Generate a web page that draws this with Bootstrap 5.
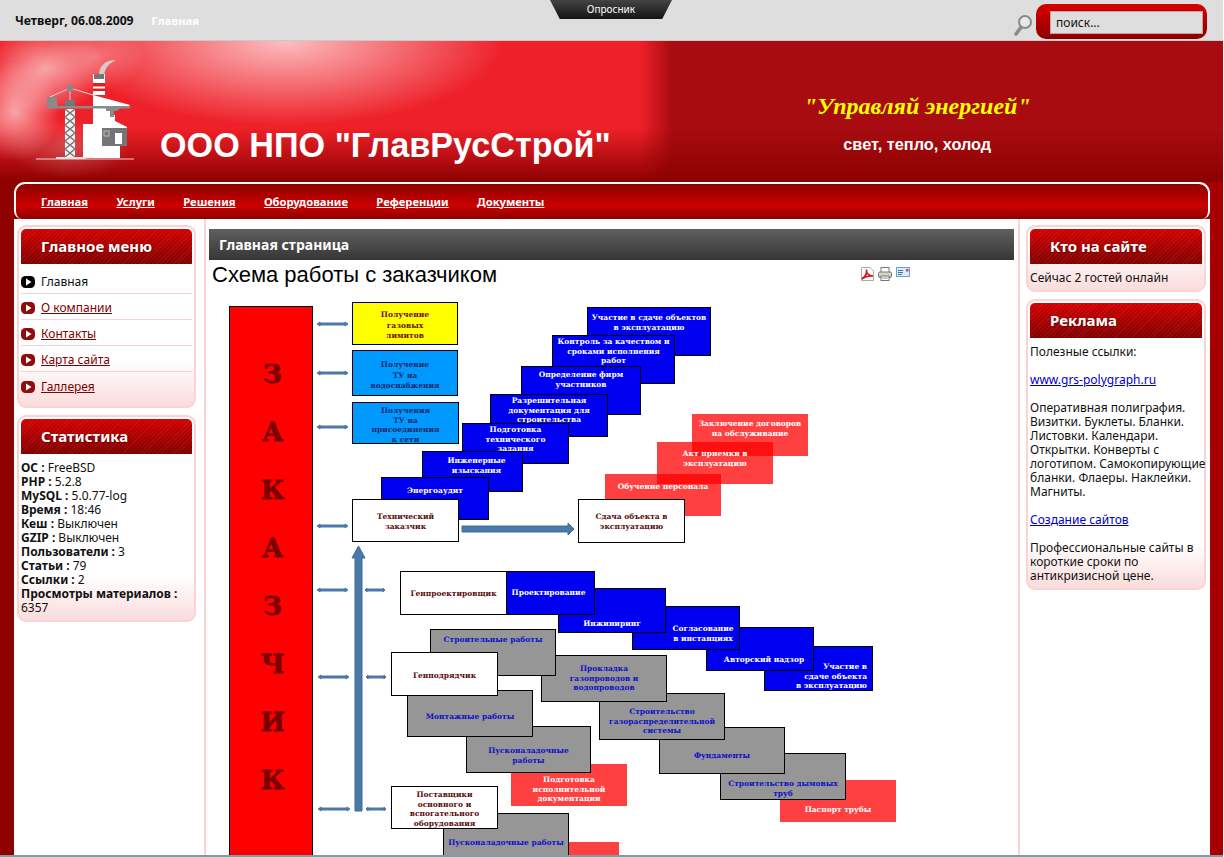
<!DOCTYPE html>
<html lang="ru">
<head>
<meta charset="utf-8">
<title>ООО НПО "ГлавРусСтрой"</title>
<link rel="stylesheet" href="https://cdn.jsdelivr.net/npm/bootstrap@5.3.0/dist/css/bootstrap.min.css">
<style>
html,body{height:857px;overflow:hidden;background:#fff;}
body{font-family:"Noto Sans","DejaVu Sans",sans-serif;font-size:12px;line-height:14px;color:#111;}
.pagewrap{width:1223px;height:857px;overflow:hidden;display:flex;flex-direction:column;background:linear-gradient(to right,#8f0000,#a80000);border-bottom:2px solid #8a98a4;}
.topstrip{height:41px;flex:none;background:#dedede;border-bottom:1px solid #c9c9c9;position:relative;padding-right:16px;}
.datewrap{padding-top:2px;}
.datetxt{margin-left:15px;font-weight:700;font-size:12.2px;color:#111;}
.hometxt{margin-left:18px;font-weight:700;font-size:11.3px;color:#fff;}
.polltab{position:absolute;left:550px;top:0;width:122px;height:19px;background:linear-gradient(#444,#141414);clip-path:polygon(0 0,100% 0,92% 100%,8% 100%);color:#fff;font-size:10px;line-height:19px;text-align:center;}
.searchbox{width:171px;height:35px;margin-top:4px;margin-left:3px;padding:7px 4px 5px 14px;border-radius:10px;background:linear-gradient(#d80000,#8c0000);}
.searchbox .form-control{height:23px;min-height:0;padding:0 5px;border-radius:0;border:1px solid #c9a0a0;background:#dedede;color:#111;font-size:12px;line-height:21px;}
.lensicon{width:20px;height:22px;margin-top:14px;flex:none;}
.hero{height:141px;flex:none;background:
 radial-gradient(ellipse 60px 45px at 45px 28px,rgba(255,255,255,.6),transparent 100%),
 radial-gradient(ellipse 45px 50px at 15px 70px,rgba(255,255,255,.6),transparent 100%),
 radial-gradient(ellipse 50px 35px at 95px 15px,rgba(255,255,255,.3),transparent 100%),
 radial-gradient(ellipse 60px 30px at 70px 108px,rgba(255,255,255,.22),transparent 100%),
 radial-gradient(ellipse 220px 85px at 285px 0,rgba(255,235,235,.78),transparent 100%),
 linear-gradient(to bottom,transparent 62%,#8c0000 100%),
 linear-gradient(to right,#ee2029 0,#ee2029 640px,#a80c10 672px,#a80c10 100%);}
.logobox{width:160px;height:141px;flex:none;}
.brandname{margin:82px 0 0;font:700 34.2px/44px "Liberation Sans",Arial,sans-serif;color:#fff;white-space:nowrap;}
.slogan{margin:51px 0 0;font:italic 700 24px/28px "Liberation Serif","Times New Roman",serif;color:#ffff00;}
.sublogan{margin:14px 0 0;font:700 16.3px/20px "Liberation Sans",Arial,sans-serif;color:#fff;}
.mainbar{height:37px;flex:none;margin:0 13px 0 14px;padding-left:10.8px;border:solid #fff;border-width:2px 2px 0 2px;border-radius:11px 11px 8px 8px;background:linear-gradient(#8e0000,#cc0000 62%,#8c0000);align-items:center;}
.mainbar .nav-link{padding:0 14.2px;color:#fff;font-weight:700;font-size:11.2px;line-height:16px;text-decoration:underline;}
.bodyarea{flex:1 1 auto;min-height:0;margin:0 13px 0 14px;background:#fff;overflow:hidden;}
.leftrail{flex:0 0 192px;padding:6px 8px 0 3px;border-right:2px solid #fbd4d4;}
.midrail{width:812px;flex:none;padding:10px 0 0 3px;overflow:hidden;}
.rightrail{width:191px;flex:none;padding:6px 3px 0 6px;border-left:2px solid #fbd4d4;}
.sidecard{border:2px solid #fbd3d3;border-radius:9px;padding:2px 2px 4px;margin-bottom:7px;background:linear-gradient(to bottom,#fff 0,#fff calc(100% - 45px),#fbdcdc 100%);}
.sidehead{height:35px;padding:0 0 0 20px;border:0;border-radius:9px;background:repeating-linear-gradient(135deg,rgba(255,255,255,.06) 0 1px,transparent 1px 3px),linear-gradient(#d40000,#800000);color:#fff;font-weight:700;font-size:15px;line-height:35px;text-shadow:1px 1px 1px #600;}
.sidebody{padding:7px 0 1px;font-size:12px;line-height:14px;}
.sidebody p{margin:0 0 14px;white-space:nowrap;}
.sidebody p:last-child{margin:0;}
.sidebody a{color:#0000c8;}
.menulist{background:transparent;margin-top:4px;padding-bottom:4px;}
.menulist .list-group-item{height:26px;padding:3px 0 0;background:transparent;border:0;border-bottom:1px solid #f7d2d2;border-radius:0;display:flex;align-items:center;gap:6px;color:#800000;font-size:12px;}
.menulist .list-group-item span{text-decoration:underline;}
.menulist .list-group-item.nowitem{color:#111;}
.menulist .list-group-item.nowitem span{text-decoration:none;}
.bulletico{width:14px;height:12px;flex:none;}
.pagebar{height:31px;width:805px;padding-left:10px;background:linear-gradient(#606060,#363636);color:#fff;font-weight:700;font-size:14px;line-height:31px;}
.arthead{height:30px;width:805px;padding:3px 104px 0 3px;}
.arthead h2{margin:0;font:400 22px/24px "Liberation Sans",Arial,sans-serif;color:#000;}
.toolico{gap:4px;margin-top:4px;}
.diagram{position:relative;width:805px;height:700px;}
.diagram svg{position:absolute;left:0;top:0;}
.dn{position:absolute;box-sizing:border-box;border:1.5px solid #000;text-align:center;white-space:nowrap;font:700 7.5px/9.5px "DejaVu Serif",serif;}
.whitebox{background:#fff;color:#5a0a0a;}
.bluebox{background:#0000f0;color:#fff;}
.graybox{background:#969696;color:#1010c8;}
.redbox{background:rgba(255,0,0,.75);color:#fff;border:0;}
.yellowbox{background:#ff0;color:#701010;line-height:10.5px;}
.skybox{background:#0099ff;color:#1a2a6a;}
.bigcol{left:20px;top:16px;width:84px;height:600px;background:#f00;padding:38px 0 0 3px;font-size:26px;line-height:58px;color:#7d0000;font-weight:700;-webkit-text-stroke:.8px #7d0000;}
.n1{left:143px;top:12px;width:106px;height:43px;padding-top:7px;}
.n2{left:143px;top:60px;width:106px;height:46px;padding-top:9px;line-height:10.5px;}
.n3{left:143px;top:112px;width:107px;height:42px;padding-top:3px;}
.n4{left:143px;top:209px;width:107px;height:43px;padding-top:12px;line-height:10px;z-index:9;}
.n5{left:172px;top:187px;width:108px;height:43px;padding-top:8px;z-index:8;}
.n6{left:213px;top:161px;width:101px;height:41px;padding:4px 0 0 8px;z-index:7;}
.n7{left:253px;top:133px;width:107px;height:41px;padding-top:1px;z-index:6;}
.n8{left:281px;top:104px;width:118px;height:43px;padding-top:1px;z-index:5;}
.n9{left:312px;top:76px;width:120px;height:49px;padding-top:3px;z-index:4;}
.n10{left:343px;top:45px;width:123px;height:49px;padding-top:1px;z-index:3;}
.n11{left:378px;top:17px;width:124px;height:49px;padding-top:5px;z-index:2;}
.n12{left:483px;top:124px;width:116px;height:42px;padding-top:5px;}
.n13{left:448px;top:152px;width:116px;height:42px;padding-top:7px;}
.n14{left:396px;top:184px;width:116px;height:42px;padding-top:8px;}
.n15{left:369px;top:209px;width:107px;height:44px;padding-top:12px;line-height:10px;z-index:3;}
.n16{left:191px;top:281px;width:107px;height:44px;padding-top:17px;z-index:9;}
.n17{left:277px;top:281px;width:109px;height:44px;padding:16px 0 0 16px;z-index:8;}
.n18{left:349px;top:298px;width:108px;height:45px;padding-top:30px;z-index:7;}
.n19{left:423px;top:316px;width:108px;height:44px;padding:17px 0 0 34px;z-index:6;}
.n20{left:497px;top:337px;width:108px;height:44px;padding:27px 0 0 8px;z-index:5;}
.n21{left:555px;top:356px;width:109px;height:45px;padding:15px 5px 0 0;z-index:4;text-align:right;}
.n22{left:182px;top:362px;width:107px;height:44px;padding-top:18px;z-index:19;}
.n23{left:221px;top:339px;width:126px;height:47px;padding-top:5px;z-index:18;}
.n24{left:332px;top:365px;width:126px;height:47px;padding-top:8px;z-index:17;}
.n25{left:390px;top:403px;width:126px;height:47px;padding-top:13px;z-index:16;}
.n26{left:450px;top:437px;width:126px;height:47px;padding-top:23px;z-index:15;}
.n27{left:511px;top:463px;width:126px;height:47px;padding-top:25px;z-index:14;}
.n28{left:571px;top:490px;width:116px;height:42px;padding-top:25px;z-index:13;}
.n29{left:198px;top:400px;width:126px;height:47px;padding-top:21px;z-index:18;}
.n30{left:257px;top:436px;width:125px;height:47px;padding-top:19px;z-index:17;}
.n31{left:302px;top:474px;width:116px;height:42px;padding-top:11px;z-index:16;}
.n32{left:182px;top:496px;width:107px;height:43px;padding-top:3px;z-index:19;}
.n33{left:234px;top:523px;width:126px;height:47px;padding-top:24px;z-index:18;}
.n34{left:360px;top:552px;width:50px;height:42px;z-index:17;}
</style>
</head>
<body>
<div class="pagewrap">
  <div class="topstrip d-flex">
    <div class="datewrap d-flex align-items-center"><span class="datetxt">Четверг, 06.08.2009</span><span class="hometxt">Главная</span></div>
    <div class="polltab">Опросник</div>
    <svg class="lensicon ms-auto" viewBox="0 0 20 22" aria-hidden="true"><line x1="9" y1="12" x2="3" y2="20" stroke="#8a8a8a" stroke-width="3.5" stroke-linecap="round"/><circle cx="12" cy="8" r="6" fill="#e8e8e8" stroke="#8a8a8a" stroke-width="2"/></svg>
    <div class="searchbox"><input class="form-control" type="text" value="поиск..." aria-label="поиск"></div>
  </div>

  <div class="hero row g-0">
    <div class="col-6 d-flex">
      <svg class="logobox" viewBox="0 41 160 141" aria-hidden="true">
        <path d="M99 75C99 66 105 60 116 60C109 63 105 68 104 75Z" fill="#d8c8c8"/>
        <rect x="93" y="74" width="12" height="21" fill="#fff"/>
        <rect x="94" y="74" width="10" height="5" fill="#777"/>
        <rect x="93" y="83" width="12" height="3.5" fill="#d82020"/>
        <rect x="93" y="88.500" width="12" height="2.500" fill="#d82020"/>
        <path d="M93 95L130 105L128 107H111V115H115V121L127 127V146H120V158H83V124H93Z" fill="#fff"/>
        <path d="M106 107H122L117 111H114V117H110V111H106Z" fill="#8a8a8a"/>
        <path d="M102 128H127V146H102Z" fill="#757575"/>
        <rect x="115" y="133" width="7" height="11" fill="#fff"/>
        <rect x="104" y="131" width="5" height="5" fill="none" stroke="#bbb"/>
        <path d="M50 97L70 88L93 95M70 88V100" fill="none" stroke="#f5d0d0" stroke-width="1"/>
        <circle cx="70" cy="88" r="3.500" fill="#888"/>
        <rect x="47" y="97" width="10" height="9" fill="#8a8a8a"/>
        <rect x="65" y="100" width="10" height="6" fill="#777"/>
        <rect x="47" y="106" width="83" height="2.500" fill="#8a8a8a"/>
        <rect x="65" y="109" width="10" height="48" fill="#f2f2f2"/>
        <path d="M65 109L75 117L65 125L75 133L65 141L75 149L65 157M75 109L65 117L75 125L65 133L75 141L65 149L75 157" fill="none" stroke="#777" stroke-width="1.500"/>
        <rect x="36" y="158.500" width="98" height="1" fill="#f3d0d0"/>
        <rect x="56" y="157" width="30" height="2" fill="#e8dede"/>
      </svg>
      <h1 class="brandname">ООО НПО "ГлавРусСтрой"</h1>
    </div>
    <div class="col-6 text-center">
      <p class="slogan">"Управляй энергией"</p>
      <p class="sublogan">свет, тепло, холод</p>
    </div>
  </div>

  <nav class="mainbar nav">
    <a class="nav-link" href="#">Главная</a>
    <a class="nav-link" href="#">Услуги</a>
    <a class="nav-link" href="#">Решения</a>
    <a class="nav-link" href="#">Оборудование</a>
    <a class="nav-link" href="#">Референции</a>
    <a class="nav-link" href="#">Документы</a>
  </nav>

  <div class="bodyarea d-flex">
    <aside class="leftrail">
      <div class="card sidecard">
        <div class="card-header sidehead">Главное меню</div>
        <div class="list-group list-group-flush menulist">
          <a href="#" class="list-group-item nowitem"><svg class="bulletico" viewBox="0 0 14 12" aria-hidden="true"><rect width="14" height="12" rx="4.500" fill="#000"/><path d="M5 2.500L10.500 6L5 9.500Z" fill="#fff"/></svg><span>Главная</span></a>
          <a href="#" class="list-group-item"><svg class="bulletico" viewBox="0 0 14 12" aria-hidden="true"><rect width="14" height="12" rx="4.500" fill="#8f0d0d"/><path d="M5 2.500L10.500 6L5 9.500Z" fill="#fff"/></svg><span>О компании</span></a>
          <a href="#" class="list-group-item"><svg class="bulletico" viewBox="0 0 14 12" aria-hidden="true"><rect width="14" height="12" rx="4.500" fill="#8f0d0d"/><path d="M5 2.500L10.500 6L5 9.500Z" fill="#fff"/></svg><span>Контакты</span></a>
          <a href="#" class="list-group-item"><svg class="bulletico" viewBox="0 0 14 12" aria-hidden="true"><rect width="14" height="12" rx="4.500" fill="#8f0d0d"/><path d="M5 2.500L10.500 6L5 9.500Z" fill="#fff"/></svg><span>Карта сайта</span></a>
          <a href="#" class="list-group-item"><svg class="bulletico" viewBox="0 0 14 12" aria-hidden="true"><rect width="14" height="12" rx="4.500" fill="#8f0d0d"/><path d="M5 2.500L10.500 6L5 9.500Z" fill="#fff"/></svg><span>Галлерея</span></a>
        </div>
      </div>
      <div class="card sidecard">
        <div class="card-header sidehead">Статистика</div>
        <div class="sidebody">
          <b>ОС :</b> FreeBSD<br><b>PHP :</b> 5.2.8<br><b>MySQL :</b> 5.0.77-log<br><b>Время :</b> 18:46<br><b>Кеш :</b> Выключен<br><b>GZIP :</b> Выключен<br><b>Пользователи :</b> 3<br><b>Статьи :</b> 79<br><b>Ссылки :</b> 2<br><b>Просмотры материалов :</b><br>6357
        </div>
      </div>
    </aside>

    <main class="midrail">
      <div class="pagebar">Главная страница</div>
      <div class="arthead d-flex justify-content-between">
        <h2>Схема работы с заказчиком</h2>
        <div class="toolico d-flex align-items-start">
          <svg width="13" height="14" viewBox="0 0 13 14" aria-hidden="true"><path d="M.5.5H9L12.500 4V13.500H.5Z" fill="#fff" stroke="#aaa"/><path d="M1 12C4 10 6 6 5.500 2.500C5 6 8 9 12 9C8 8.500 4 9.500 1 12Z" fill="none" stroke="#d01818" stroke-width="1.600"/></svg>
          <svg width="14" height="14" viewBox="0 0 14 14" aria-hidden="true"><rect x="3" y=".5" width="8" height="5" fill="#fff" stroke="#777"/><rect x=".5" y="5" width="13" height="5.500" rx="1.500" fill="#d8d4c0" stroke="#777"/><rect x="3" y="9" width="8" height="4.500" fill="#fff" stroke="#777"/><line x1="4" y1="11" x2="10" y2="11" stroke="#999"/></svg>
          <svg width="14" height="10" viewBox="0 0 14 10" aria-hidden="true"><rect x=".5" y=".5" width="13" height="9" fill="#dcecf6" stroke="#6fa0c8"/><path d="M2 3.500H7M2 5.500H7M2 7.500H6" stroke="#3878b0"/><rect x="10" y="2" width="2.500" height="2.500" fill="#d04060"/></svg>
        </div>
      </div>
      <div class="diagram">
        <svg width="805" height="700" viewBox="209 290 805 700" aria-hidden="true">
          <g fill="#4a79a8" stroke="#4a79a8">
            <path d="M317 324L320 322V323H345V322L348 324L345 326V325H320V326Z"/>
            <path d="M317 373L320 371V372H345V371L348 373L345 375V374H320V375Z"/>
            <path d="M317 427L320 425V426H345V425L348 427L345 429V428H320V429Z"/>
            <path d="M317 526L320 524V525H345V524L348 526L345 528V527H320V528Z"/>
            <path d="M317 590L320 588V589H345V588L348 590L345 592V591H320V592Z"/>
            <path d="M365 590L367 588V589H383V588L385 590L383 592V591H367V592Z"/>
            <path d="M318 677L321 675V676H346V675L349 677L346 679V678H321V679Z"/>
            <path d="M366 677L368 675V676H384V675L386 677L384 679V678H368V679Z"/>
            <path d="M318 809L321 807V808H347V807L350 809L347 811V810H321V811Z"/>
            <path d="M366 809L368 807V808H384V807L386 809L384 811V810H368V811Z"/>
          </g>
          <path d="M462 526H568V523L574 529L568 535V532H462Z" fill="#4a79a8" stroke="#3f6c98"/>
          <path d="M355 811V558H352L358.500 546L365 558H362V811Z" fill="#4a79a8" stroke="#3f6c98"/>
        </svg>
        <div class="dn bigcol">З<br>А<br>К<br>А<br>З<br>Ч<br>И<br>К</div>
        <div class="dn yellowbox n1">Получение<br>газовых<br>лимитов</div>
        <div class="dn skybox n2">Получение<br>ТУ на<br>водоснабжения</div>
        <div class="dn skybox n3">Получения<br>ТУ на<br>присоединения<br>к сети</div>
        <div class="dn whitebox n4">Технический<br>заказчик</div>
        <div class="dn bluebox n5">Энергоаудит</div>
        <div class="dn bluebox n6">Инженерные<br>изыскания</div>
        <div class="dn bluebox n7">Подготовка<br>технического<br>задания</div>
        <div class="dn bluebox n8">Разрешительная<br>документация для<br>строительства</div>
        <div class="dn bluebox n9">Определение фирм<br>участников</div>
        <div class="dn bluebox n10">Контроль за качеством и<br>сроками исполнения<br>работ</div>
        <div class="dn bluebox n11">Участие в сдаче объектов<br>в эксплуатацию</div>
        <div class="dn redbox n12">Заключение договоров<br>на обслуживание</div>
        <div class="dn redbox n13">Акт приемки в<br>эксплуатацию</div>
        <div class="dn redbox n14">Обучение персонала</div>
        <div class="dn whitebox n15">Сдача объекта в<br>эксплуатацию</div>
        <div class="dn whitebox n16">Генпроектировщик</div>
        <div class="dn bluebox n17">Проектирование</div>
        <div class="dn bluebox n18">Инжиниринг</div>
        <div class="dn bluebox n19">Согласование<br>в инстанциях</div>
        <div class="dn bluebox n20">Авторский надзор</div>
        <div class="dn bluebox n21">Участие в<br>сдаче объекта<br>в эксплуатацию</div>
        <div class="dn whitebox n22">Генподрядчик</div>
        <div class="dn graybox n23">Строительные работы</div>
        <div class="dn graybox n24">Прокладка<br>газопроводов и<br>водопроводов</div>
        <div class="dn graybox n25">Строительство<br>газораспределительной<br>системы</div>
        <div class="dn graybox n26">Фундаменты</div>
        <div class="dn graybox n27">Строительство дымовых<br>труб</div>
        <div class="dn redbox n28">Паспорт трубы</div>
        <div class="dn graybox n29">Монтажные работы</div>
        <div class="dn graybox n30">Пусконаладочные<br>работы</div>
        <div class="dn redbox n31">Подготовка<br>исполнительной<br>документации</div>
        <div class="dn whitebox n32">Поставщики<br>основного и<br>вспогательного<br>оборудования</div>
        <div class="dn graybox n33">Пусконаладочные работы</div>
        <div class="dn redbox n34"></div>
      </div>
    </main>

    <aside class="rightrail">
      <div class="card sidecard">
        <div class="card-header sidehead">Кто на сайте</div>
        <div class="sidebody">Сейчас 2 гостей онлайн</div>
      </div>
      <div class="card sidecard">
        <div class="card-header sidehead">Реклама</div>
        <div class="sidebody">
          <p>Полезные ссылки:</p>
          <p><a href="#">www.grs-polygraph.ru</a></p>
          <p>Оперативная полиграфия.<br>Визитки. Буклеты. Бланки.<br>Листовки. Календари.<br>Открытки. Конверты с<br>логотипом. Самокопирующие<br>бланки. Флаеры. Наклейки.<br>Магниты.</p>
          <p><a href="#">Создание сайтов</a></p>
          <p>Профессиональные сайты в<br>короткие сроки по<br>антикризисной цене.</p>
        </div>
      </div>
    </aside>
  </div>
</div>
<script src="https://cdn.jsdelivr.net/npm/bootstrap@5.3.0/dist/js/bootstrap.bundle.min.js"></script>
</body>
</html>
